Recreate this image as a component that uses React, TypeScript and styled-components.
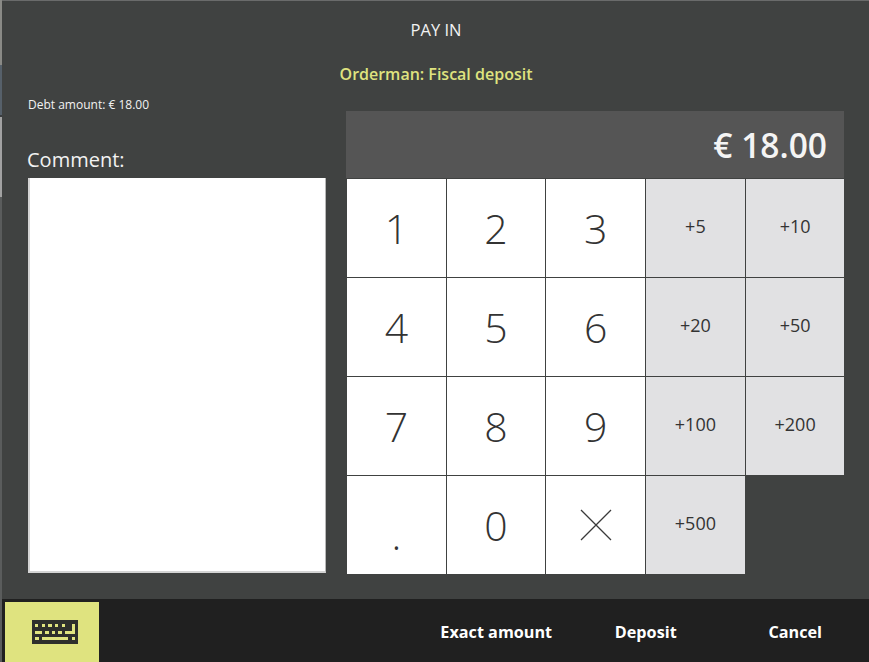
import styled, { createGlobalStyle } from "styled-components";

const GlobalStyle = createGlobalStyle`
  html, body {
    margin: 0;
    padding: 0;
    background: #404241;
  }
  * {
    box-sizing: border-box;
  }
`;

const keys = ["1", "2", "3", "+5", "+10", "4", "5", "6", "+20", "+50", "7", "8", "9", "+100", "+200", ".", "0", "x", "+500"];

// what shows of the window behind the dialog, along its left edge
const backdrop = [
  { height: 65, color: "#8a8a86" },
  { height: 50, color: "#56606a" },
  { height: 2, color: "#3a3d40" },
  { height: 80, color: "#a2a2a2" },
  { height: 465, color: "#5a5c5c" },
];

const KeyboardIcon = () => (
  <svg width="46" height="24" viewBox="0 0 46 24">
    <path
      fill="#2e2f2c"
      fillRule="evenodd"
      d="M0 0h46v24H0zM3 4v3h3V4zM10 4v3h3V4zM16 4v3h4V4zM23 4v3h3V4zM30 4v3h3V4zM3 11v3h7v-3zM13 11v3h4v-3zM20 11v3h3v-3zM26 11v3h4v-3zM33 11v3h10V4h-3v7zM3 17v3h4v-3zM10 17v3h26v-3zM40 17v3h3v-3z"
    />
  </svg>
);

const App = () => {
  return (
    <>
      <GlobalStyle />
      <Page>
        <Backdrop>
          {backdrop.map((part, index) => (
            <BackdropPart key={index} $height={part.height} $color={part.color} />
          ))}
        </Backdrop>
        <Dialog>
          <Body>
            <Title>PAY IN</Title>
            <Subtitle>Orderman: Fiscal deposit</Subtitle>
            <Columns>
              <LeftColumn>
                <Debt>Debt amount: € 18.00</Debt>
                <CommentLabel>Comment:</CommentLabel>
                <CommentBox />
              </LeftColumn>
              <RightColumn>
                <Amount>€ 18.00</Amount>
                <Keypad>
                  {keys.map((key) => (
                    <Key key={key} $quick={key.startsWith("+")} $dot={key === "."}>
                      {key === "x" ? (
                        <svg width="32" height="32" viewBox="0 0 32 32">
                          <path d="M1 1l30 30M31 1L1 31" stroke="#3a3a3a" strokeWidth="1.3" fill="none" />
                        </svg>
                      ) : (
                        key
                      )}
                    </Key>
                  ))}
                </Keypad>
              </RightColumn>
            </Columns>
          </Body>
          <Footer>
            <KeyboardButton>
              <KeyboardIcon />
            </KeyboardButton>
            <Actions>
              <Action>Exact amount</Action>
              <Action>Deposit</Action>
              <Action>Cancel</Action>
            </Actions>
          </Footer>
        </Dialog>
      </Page>
    </>
  );
};

export default App;

const Page = styled.div`
  width: 869px;
  height: 662px;
  display: flex;
  background: #404241;
  font-family: "Open Sans", "Liberation Sans", sans-serif;
  overflow: hidden;
`;

const Backdrop = styled.div`
  width: 2px;
  flex: none;
  display: flex;
  flex-direction: column;
`;

const BackdropPart = styled.div<{ $height: number; $color: string }>`
  height: ${(p) => p.$height}px;
  background: ${(p) => p.$color};
`;

const Dialog = styled.div`
  flex: 1;
  min-width: 0;
  display: flex;
  flex-direction: column;
  border-top: 1px solid #6a6b6b;
`;

const Body = styled.div`
  flex: 1;
  display: flex;
  flex-direction: column;
  padding: 0 25px 0 26px;
`;

const Title = styled.div`
  margin-top: 19px;
  height: 20px;
  line-height: 20px;
  text-align: center;
  font-size: 16.5px;
  color: #f2f2f2;
`;

const Subtitle = styled.div`
  margin-top: 23px;
  height: 22px;
  line-height: 22px;
  text-align: center;
  font-size: 16px;
  font-weight: 600;
  color: #dfe37f;
`;

const Columns = styled.div`
  display: flex;
  margin-top: 26px;
  gap: 20px;
`;

const LeftColumn = styled.div`
  width: 298px;
  flex: none;
  display: flex;
  flex-direction: column;
  margin-top: -14px;
`;

const Debt = styled.div`
  font-size: 12px;
  line-height: 16px;
  color: #f2f2f2;
`;

const CommentLabel = styled.div`
  margin: 33px 0 0 -1px;
  font-size: 20px;
  line-height: 27px;
  color: #f2f2f2;
`;

const CommentBox = styled.div`
  width: 298px;
  height: 395px;
  margin-top: 5px;
  background: #fff;
  border-left: 2px solid #d4d4d4;
  border-right: 1px solid #b8b8b8;
  border-bottom: 2px solid #d4d4d4;
`;

const RightColumn = styled.div`
  width: 498px;
  flex: none;
`;

const Amount = styled.div`
  height: 67px;
  padding: 2px 17px 0 0;
  background: #555555;
  color: #f4f4f4;
  font-size: 33.5px;
  font-weight: 600;
  line-height: 65px;
  text-align: right;
`;

const Keypad = styled.div`
  display: grid;
  grid-template-columns: repeat(5, 99.7px);
  grid-auto-rows: 99px;
`;

const Key = styled.div<{ $quick: boolean; $dot: boolean }>`
  display: flex;
  align-items: center;
  justify-content: center;
  padding-top: ${(p) => (p.$dot ? "18px" : "0")};
  padding-bottom: ${(p) => (p.$quick ? "5px" : "0")};
  background: ${(p) => (p.$quick ? "#e1e1e3" : "#fff")};
  border-top: 1px solid #404241;
  border-left: 1px solid #404241;
  color: #333;
  font-size: ${(p) => (p.$quick ? "18px" : "41px")};
  font-weight: ${(p) => (p.$quick ? 400 : 300)};
`;

const Footer = styled.div`
  height: 63px;
  display: flex;
  justify-content: space-between;
  background: #202020;
  padding-left: 3px;
  padding-top: 3px;
`;

const KeyboardButton = styled.div`
  width: 94px;
  display: flex;
  align-items: center;
  justify-content: center;
  padding-left: 6px;
  padding-bottom: 1px;
  background: #dfe37f;
`;

const Actions = styled.div`
  display: grid;
  grid-template-columns: repeat(3, 149.5px);
  align-items: center;
`;

const Action = styled.div`
  padding-left: 2px;
  text-align: center;
  font-size: 16.2px;
  font-weight: 700;
  color: #fff;
`;
